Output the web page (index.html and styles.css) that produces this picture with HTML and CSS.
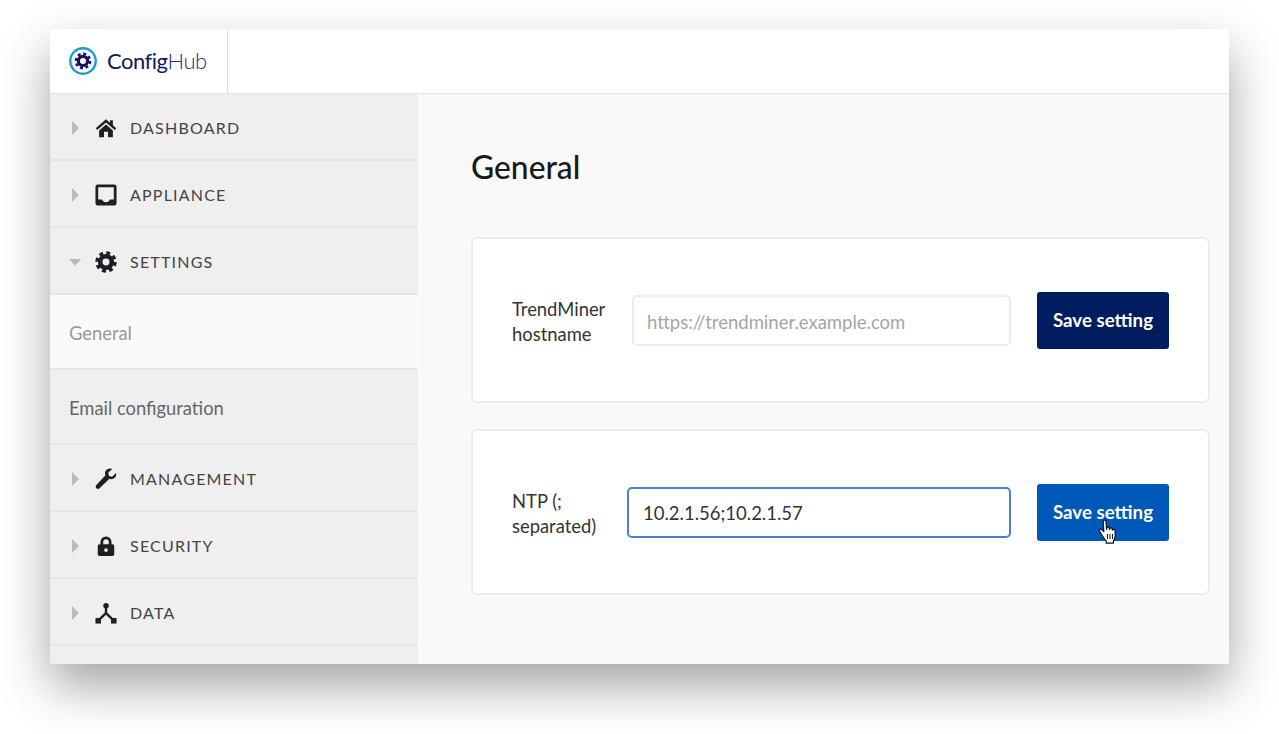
FILE: index.html
```html
<!DOCTYPE html>
<html lang="en">
<head>
<meta charset="utf-8">
<title>ConfigHub</title>
<link rel="stylesheet" href="styles.css">
</head>
<body>
<div class="window">
  <header class="topbar">
    <div class="brand">
      <svg class="brand-mark" viewBox="0 0 28 28">
        <circle cx="14" cy="14" r="12.7" fill="none" stroke="#1b9ad6" stroke-width="2.4"/>
        <circle cx="14" cy="14" r="4.6" fill="none" stroke="#16125f" stroke-width="3.2"/>
        <circle cx="14" cy="14" r="7.2" fill="none" stroke="#16125f" stroke-width="2.4" stroke-dasharray="3 2.65"/>
      </svg>
      <span class="brand-name">Config<span class="brand-light">Hub</span></span>
    </div>
  </header>
  <div class="body">
    <nav class="sidebar">
      <a class="nav-item"><span class="caret"></span>
        <svg class="nav-icon" viewBox="0 0 24 24"><path d="M12 2.5 .8 12.2l1.7 2L12 6l9.5 8.2 1.7-2-3.7-3.2V3.6h-3.2v2.6z"/><path d="M12 8.2 4.5 14.6V22h5.3v-6h4.4v6h5.3v-7.4z"/></svg>
        <span>DASHBOARD</span></a>
      <a class="nav-item"><span class="caret"></span>
        <svg class="nav-icon" viewBox="0 0 24 24"><path fill-rule="evenodd" d="M3 .5h18A2.500 2.500 0 0 1 23.500 3v18a2.500 2.500 0 0 1-2.500 2.500H3A2.500 2.500 0 0 1 .5 21V3A2.500 2.500 0 0 1 3 .5zM3.500 3.500v13.500h4.200c.5 1.800 2.200 2.800 4.300 2.800s3.800-1 4.300-2.800h4.200V3.500z"/></svg>
        <span>APPLIANCE</span></a>
      <a class="nav-item"><span class="caret caret-open"></span>
        <svg class="nav-icon nav-icon-line" viewBox="0 0 24 24"><circle cx="12" cy="12" r="6.300" stroke-width="5"/><circle cx="12" cy="12" r="9.800" stroke-width="3.800" stroke-dasharray="4.200 3.500"/></svg>
        <span>SETTINGS</span></a>
      <a class="sub-item sub-active">General</a>
      <a class="sub-item">Email configuration</a>
      <a class="nav-item"><span class="caret"></span>
        <svg class="nav-icon" viewBox="0 0 24 24"><path d="M23 5.500l-4.300 4-3.400-.9-.9-3.300L18.700 1c-3-1-6 0-7.300 2.500-.7 1.500-.6 3.100 0 4.400L1.500 18.600c-1 1.100-1 2.500 0 3.500s2.500 1 3.500 0L15.700 11.800c1.300.5 2.900.5 4.200-.1C22.400 10.500 23.700 8.300 23 5.500z"/></svg>
        <span>MANAGEMENT</span></a>
      <a class="nav-item"><span class="caret"></span>
        <svg class="nav-icon" viewBox="0 0 24 24"><path fill-rule="evenodd" d="M6 10V7.500a6 6 0 0 1 12 0V10h1a2 2 0 0 1 2 2v9a2 2 0 0 1-2 2H5a2 2 0 0 1-2-2v-9a2 2 0 0 1 2-2zM9 10h6V7.500a3 3 0 0 0-6 0zM12 14.500a2 2 0 1 0 0 4 2 2 0 0 0 0-4z"/></svg>
        <span>SECURITY</span></a>
      <a class="nav-item"><span class="caret"></span>
        <svg class="nav-icon" viewBox="0 0 24 24"><circle cx="12" cy="4" r="3"/><path d="M10.700 6h2.600v5.500l6.100 6-1.800 1.800-5.600-5.500-5.600 5.500-1.800-1.800 6.100-6z"/><rect x=".5" y="17.500" width="6" height="6"/><rect x="17.500" y="17.500" width="6" height="6"/></svg>
        <span>DATA</span></a>
    </nav>
    <main class="content">
      <h1 class="page-title">General</h1>
      <section class="card">
        <label class="field-label label-wide">TrendMiner hostname</label>
        <input class="field-input placeholder-pad" type="text" placeholder="https://trendminer.example.com">
        <button class="save-btn" type="button">Save setting</button>
      </section>
      <section class="card">
        <label class="field-label label-narrow">NTP (; separated)</label>
        <input class="field-input field-focus" type="text" value="10.2.1.56;10.2.1.57">
        <button class="save-btn save-hover" type="button">Save setting
          <svg class="hand-cursor" viewBox="0 0 20 26"><path d="M5.200 2.500c0-1.800 2.700-1.800 2.800 0l.6 8 .3-1.600c.4-1.500 2.400-1.200 2.500.3l.1 1.300.4-.9c.6-1.200 2.300-.8 2.400.6l.1 1 .4-.4c.9-.8 2.200-.2 2.300 1l.1 4.700c0 2.500-.9 4.200-1.800 5.500v2.200H8.200v-2.300c-1.500-1.200-2.700-3.200-4-5.400L1.500 12c-.8-1.500 1-2.800 2.300-1.500l2 2z" fill="#fff" stroke="#111" stroke-width="1.200" stroke-linejoin="round"/><path d="M9.500 15v5M12 15v5M14.500 15v5" stroke="#111" stroke-width="1"/></svg>
        </button>
      </section>
    </main>
  </div>
</div>
</body>
</html>
```

FILE: styles.css
```css
* { box-sizing: border-box; }
html, body { margin: 0; height: 100%; }
body {
  background: #fff;
  font-family: Lato, "Open Sans", sans-serif;
  padding: 29px 50px 70px;
  overflow: hidden;
}
.window {
  width: 1179px;
  height: 635px;
  display: flex;
  flex-direction: column;
  background: #f9f9f9;
  box-shadow: 0 22px 46px rgba(0, 0, 0, .36);
  overflow: hidden;
}
.topbar {
  height: 65px;
  flex: none;
  background: #fff;
  border-bottom: 1px solid #e2e2e2;
  display: flex;
}
.brand {
  width: 178px;
  border-right: 1px solid #dcdcdc;
  display: flex;
  align-items: center;
  padding-left: 19px;
  gap: 10px;
}
.brand-mark { width: 28px; height: 28px; flex: none; }
.brand-name {
  font-size: 22px;
  letter-spacing: -.5px;
  color: #0f1a5c;
  padding-bottom: 2px;
}
.brand-light { font-weight: 300; color: #1f2f7c; }
.body { flex: 1; display: flex; min-height: 0; }
.sidebar {
  width: 368px;
  flex: none;
  background: #efefef;
  display: flex;
  flex-direction: column;
}
.nav-item {
  height: 67px;
  flex: none;
  display: flex;
  align-items: center;
  padding: 2px 0 0 19px;
  border-bottom: 2px solid #e5e5e5;
  font-size: 16px;
  letter-spacing: 1.2px;
  color: #444;
}
.caret {
  width: 26px;
  flex: none;
  height: 0;
  position: relative;
}
.caret::before {
  content: "";
  position: absolute;
  left: 3px;
  top: -7px;
  border-style: solid;
  border-width: 7px 0 7px 7px;
  border-color: transparent transparent transparent #bbb;
}
.caret-open::before {
  left: 0;
  top: -3px;
  border-width: 7px 6.500px 0;
  border-color: #bbb transparent transparent;
}
.nav-icon {
  width: 22px;
  height: 22px;
  flex: none;
  margin-right: 13px;
  fill: #1d1f24;
}
.nav-icon-line { fill: none; stroke: #1d1f24; }
.sub-item {
  height: 75px;
  flex: none;
  display: flex;
  align-items: center;
  padding: 2px 0 0 19px;
  border-bottom: 2px solid #e5e5e5;
  font-size: 18.350px;
  color: #666;
}
.sub-active { background: #fafafa; color: #999; }
.content {
  flex: 1;
  padding: 0 19px 0 53px;
  min-width: 0;
}
.page-title {
  margin: 52px 0 49px;
  font-size: 31.800px;
  line-height: 42px;
  font-weight: 500;
  color: #1a1a1a;
}
.card {
  height: 166px;
  margin-bottom: 26px;
  padding: 0 39px;
  display: flex;
  align-items: center;
  background: #fff;
  border: 2px solid #ececec;
  border-radius: 6px;
}
.field-label {
  flex: none;
  padding-top: 3px;
  font-size: 18.400px;
  line-height: 25px;
  color: #333;
}
.label-wide { width: 120px; }
.label-narrow { width: 115px; }
.field-input {
  flex: 1;
  min-width: 0;
  height: 51px;
  margin-right: 26px;
  padding: 2px 14px 0;
  border: 2px solid #ececec;
  border-radius: 5px;
  background: #fff;
  font: 18.500px Lato, "Open Sans", sans-serif;
  color: #333;
  outline: none;
}
.placeholder-pad { padding: 4px 14px 0 13px; }
.field-input::placeholder { color: #a5a5a5; opacity: 1; }
.field-input.field-focus { border: 2px solid #4a7fd0; }
.save-btn {
  position: relative;
  width: 132px;
  height: 57px;
  flex: none;
  border: 0;
  border-radius: 3px;
  background: #001d60;
  color: #fff;
  font: 700 18.700px Lato, "Open Sans", sans-serif;
  padding: 0;
}
.save-hover { background: #0059b8; }
.hand-cursor {
  position: absolute;
  left: 61px;
  top: 35px;
  width: 20px;
  height: 26px;
}
```
